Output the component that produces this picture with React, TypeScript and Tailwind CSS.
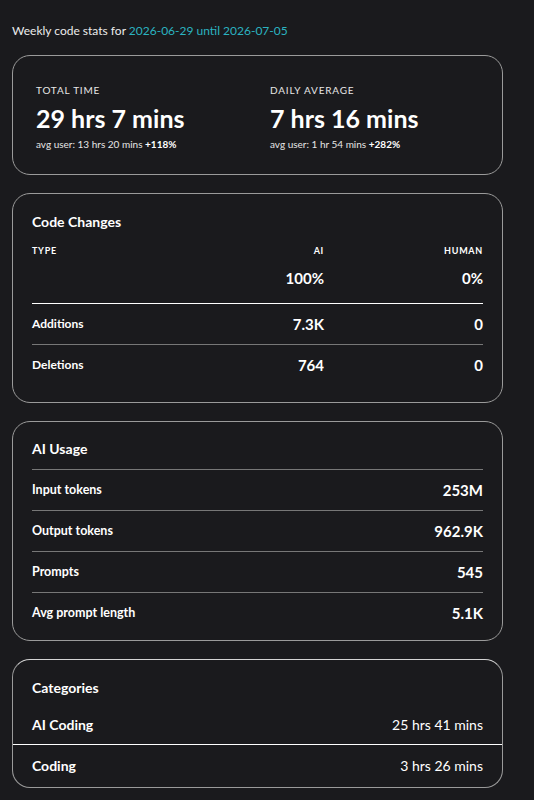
import React from 'react';

const font = { fontFamily: 'Lato, "Open Sans", sans-serif' };

const Card: React.FC<{ children: React.ReactNode; className?: string }> = ({ children, className = '' }) => (
  <div className={`rounded-[18px] border border-[#9a9a9a] ${className}`}>{children}</div>
);

const Stat: React.FC<{ label: string; value: string; avg: string; delta: string }> = ({ label, value, avg, delta }) => (
  <div>
    <div className="text-[10px] leading-[14px] tracking-[0.08em] text-[#e6e6e6]">{label}</div>
    <div className="mt-[6px] text-[25px] font-bold leading-[30px] text-white">{value}</div>
    <div className="mt-[4px] text-[10px] leading-[14px] text-[#e6e6e6]">
      {avg} <span className="font-bold text-white">{delta}</span>
    </div>
  </div>
);

const usage = [
  ['Input tokens', '253M'],
  ['Output tokens', '962.9K'],
  ['Prompts', '545'],
  ['Avg prompt length', '5.1K'],
];

export default function App() {
  return (
    <div className="min-h-screen bg-[#1a1a1d] pl-3 pt-[22px] pb-3 text-white" style={font}>
      <div className="w-[491px]">
        <p className="text-[12px] leading-[18px] text-[#ececec]">
          Weekly code stats for <span className="text-[#2bb3c0]">2026-06-29 until 2026-07-05</span>
        </p>

        <div className="mt-[15px] flex flex-col gap-[18px]">
          <Card className="grid h-[120px] grid-cols-[234px_1fr] items-center px-[23px] pt-[3px]">
            <Stat label="TOTAL TIME" value="29 hrs 7 mins" avg="avg user: 13 hrs 20 mins" delta="+118%" />
            <Stat label="DAILY AVERAGE" value="7 hrs 16 mins" avg="avg user: 1 hr 54 mins" delta="+282%" />
          </Card>

          <Card className="px-[19px] pt-[18px] pb-[17px]">
            <h2 className="text-[14px] font-bold leading-[20px]">Code Changes</h2>
            <div className="mt-[12px] grid grid-cols-[1fr_120px_159px] text-[9px] font-bold tracking-[0.08em]">
              <span>TYPE</span>
              <span className="text-right">AI</span>
              <span className="text-right">HUMAN</span>
            </div>
            <div className="mt-[9px] grid grid-cols-[1fr_120px_159px] border-b border-white pb-[14px] text-[15px] font-bold">
              <span />
              <span className="text-right">100%</span>
              <span className="text-right">0%</span>
            </div>
            <div className="grid h-[41px] grid-cols-[1fr_120px_159px] items-center border-b border-[#777]">
              <span className="text-[12px] font-bold">Additions</span>
              <span className="text-right text-[15px] font-bold">7.3K</span>
              <span className="text-right text-[15px] font-bold">0</span>
            </div>
            <div className="grid h-[40px] grid-cols-[1fr_120px_159px] items-center">
              <span className="text-[12px] font-bold">Deletions</span>
              <span className="text-right text-[15px] font-bold">764</span>
              <span className="text-right text-[15px] font-bold">0</span>
            </div>
          </Card>

          <Card className="px-[19px] pt-[17px] pb-[7px]">
            <h2 className="pb-[10px] text-[14px] font-bold leading-[20px]">AI Usage</h2>
            {usage.map(([k, v]) => (
              <div key={k} className="flex h-[41px] items-center justify-between border-t border-[#777]">
                <span className="text-[12.5px] font-bold">{k}</span>
                <span className="text-[15px] font-bold">{v}</span>
              </div>
            ))}
          </Card>

          <Card className="overflow-hidden border-t-[#d4d4d4]">
            <h2 className="px-[19px] pt-[18px] text-[14px] font-bold leading-[20px]">Categories</h2>
            <div className="mt-[6px] flex h-[41px] items-center justify-between border-b border-white px-[19px] text-[14px]">
              <span className="font-bold">AI Coding</span>
              <span>25 hrs 41 mins</span>
            </div>
            <div className="flex h-[42px] items-center justify-between px-[19px] pb-[1px] text-[14px]">
              <span className="font-bold">Coding</span>
              <span>3 hrs 26 mins</span>
            </div>
          </Card>
        </div>
      </div>
    </div>
  );
}
